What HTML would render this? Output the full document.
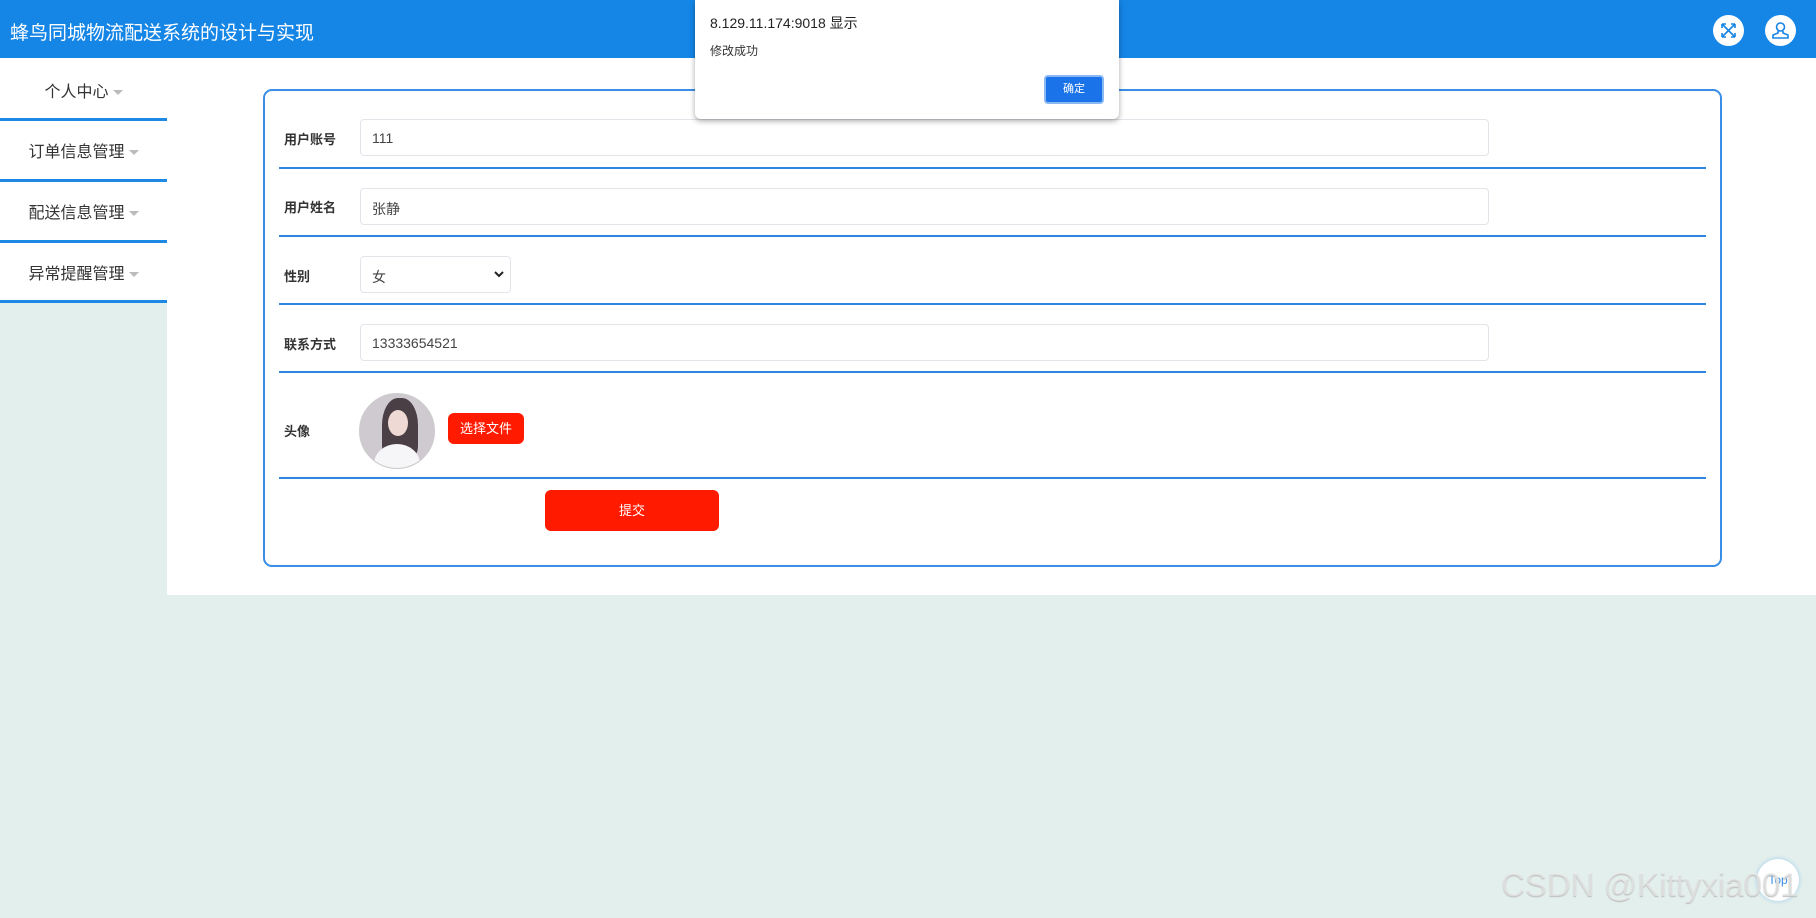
<!DOCTYPE html>
<html><head><meta charset="utf-8"><style>
*{margin:0;padding:0;box-sizing:border-box}
body{width:1816px;height:918px;background:#e3efec;position:relative;overflow:hidden;font-family:"Liberation Sans","Noto Sans CJK SC",sans-serif;color:#333}
.hdr{position:absolute;left:0;top:0;width:1816px;height:58px;background:#1585e6}
.hdr .t{position:absolute;left:10px;top:18px;color:#fff;font-size:19px}
.ic{position:absolute;top:15px;width:31px;height:31px;border-radius:50%;background:#fff}
.side{position:absolute;left:0;top:58px;width:167px;height:244px;background:#fff}
.si{position:absolute;left:0;width:167px;text-align:center;font-size:16px;color:#333}
.sl{position:absolute;left:0;width:167px;height:3px;background:#1e88e5}
.caret{display:inline-block;width:0;height:0;border-left:5px solid transparent;border-right:5px solid transparent;border-top:5px solid #bbb;margin-left:4px;vertical-align:middle}
.main{position:absolute;left:167px;top:58px;width:1649px;height:537px;background:#fff}
.card{position:absolute;left:263px;top:89px;width:1459px;height:478px;border:2px solid #3a8ee6;border-radius:9px}
.lab{position:absolute;left:284px;font-size:13px;font-weight:bold;color:#333}
.inp{position:absolute;left:360px;width:1129px;height:37px;border:1px solid #e2e4ea;border-radius:4px;font-size:14px;padding:10px 0 0 11px;color:#444}
.rl{position:absolute;left:279px;width:1427px;height:2px;background:#2f86e0}
.btn{position:absolute;background:#ff1a00;color:#fff;border-radius:6px;text-align:center}
.dlg{position:absolute;left:695px;top:0;width:424px;height:119px;background:#fff;border-radius:0 0 6px 6px;box-shadow:0 2px 6px rgba(0,0,0,.35)}
</style></head><body>
<div class="hdr"><div class="t">蜂鸟同城物流配送系统的设计与实现</div>
<div class="ic" style="left:1713px"><svg width="31" height="31" viewBox="0 0 31 31" fill="none" stroke="#1585e6" stroke-width="1.6"><path d="M9 9l13 13M22 9L9 22M9 9h4M9 9v4M22 9h-4M22 9v4M9 22h4M9 22v-4M22 22h-4M22 22v-4"/></svg></div>
<div class="ic" style="left:1765px"><svg width="31" height="31" viewBox="0 0 31 31" fill="none" stroke="#1585e6" stroke-width="1.6"><circle cx="15.5" cy="12" r="4"/><path d="M13 16v2l-5 2v3h15v-3l-5-2v-2"/></svg></div>
</div>
<div class="side">
<div class="si" style="top:20px">个人中心<span class="caret"></span></div>
<div class="sl" style="top:60px"></div>
<div class="si" style="top:80px">订单信息管理<span class="caret"></span></div>
<div class="sl" style="top:121px"></div>
<div class="si" style="top:141px">配送信息管理<span class="caret"></span></div>
<div class="sl" style="top:182px"></div>
<div class="si" style="top:202px">异常提醒管理<span class="caret"></span></div>
<div class="sl" style="top:242px"></div>
</div>
<div class="main"></div>
<div class="card"></div>
<div class="lab" style="top:129px">用户账号</div>
<div class="inp" style="top:119px">111</div>
<div class="rl" style="top:167px"></div>
<div class="lab" style="top:197px">用户姓名</div>
<div class="inp" style="top:188px">张静</div>
<div class="rl" style="top:235px"></div>
<div class="lab" style="top:266px">性别</div>
<div class="inp" style="top:256px;width:151px">女<svg style="position:absolute;right:6px;top:14px" width="10" height="7" viewBox="0 0 10 7"><path d="M1 1l4 4 4-4" stroke="#222" stroke-width="2" fill="none"/></svg></div>
<div class="rl" style="top:303px"></div>
<div class="lab" style="top:334px">联系方式</div>
<div class="inp" style="top:324px">13333654521</div>
<div class="rl" style="top:371px"></div>
<div class="lab" style="top:421px">头像</div>
<div style="position:absolute;left:359px;top:393px;width:76px;height:76px;border-radius:50%;border:1px solid #ccc;background:#cfc9d0;overflow:hidden">
<div style="position:absolute;left:22px;top:4px;width:36px;height:60px;border-radius:45% 45% 20% 20%;background:#4a3f44"></div>
<div style="position:absolute;left:28px;top:16px;width:20px;height:26px;border-radius:50%;background:#efd9d4"></div>
<div style="position:absolute;left:14px;top:50px;width:46px;height:40px;border-radius:50% 50% 0 0;background:#f6f6f8"></div>
</div>
<div class="btn" style="left:448px;top:413px;width:76px;height:31px;font-size:13px;line-height:31px">选择文件</div>
<div class="rl" style="top:477px"></div>
<div class="btn" style="left:545px;top:490px;width:174px;height:41px;font-size:13px;line-height:41px">提交</div>
<div class="dlg">
<div style="position:absolute;left:15px;top:13px;font-size:14px;color:#222">8.129.11.174:9018 显示</div>
<div style="position:absolute;left:15px;top:42px;font-size:12px;color:#333">修改成功</div>
<div style="position:absolute;left:349px;top:75px;width:60px;height:29px;border:2px solid #8ab8f4;border-radius:4px;background:#1a73e8;color:#fff;font-size:11px;text-align:center;line-height:25px">确定</div>
</div>
<div style="position:absolute;left:1757px;top:859px;width:42px;height:42px;border-radius:50%;background:#fff;box-shadow:0 0 5px #9ccbee;color:#3a8ee6;font-size:12px;text-align:center;line-height:42px">Top</div>
<div style="position:absolute;left:1501px;top:866px;font-size:33px;color:rgba(240,244,242,.6);text-shadow:0 1px 1px #bbb;white-space:nowrap">CSDN @Kittyxia001</div>
</body></html>
